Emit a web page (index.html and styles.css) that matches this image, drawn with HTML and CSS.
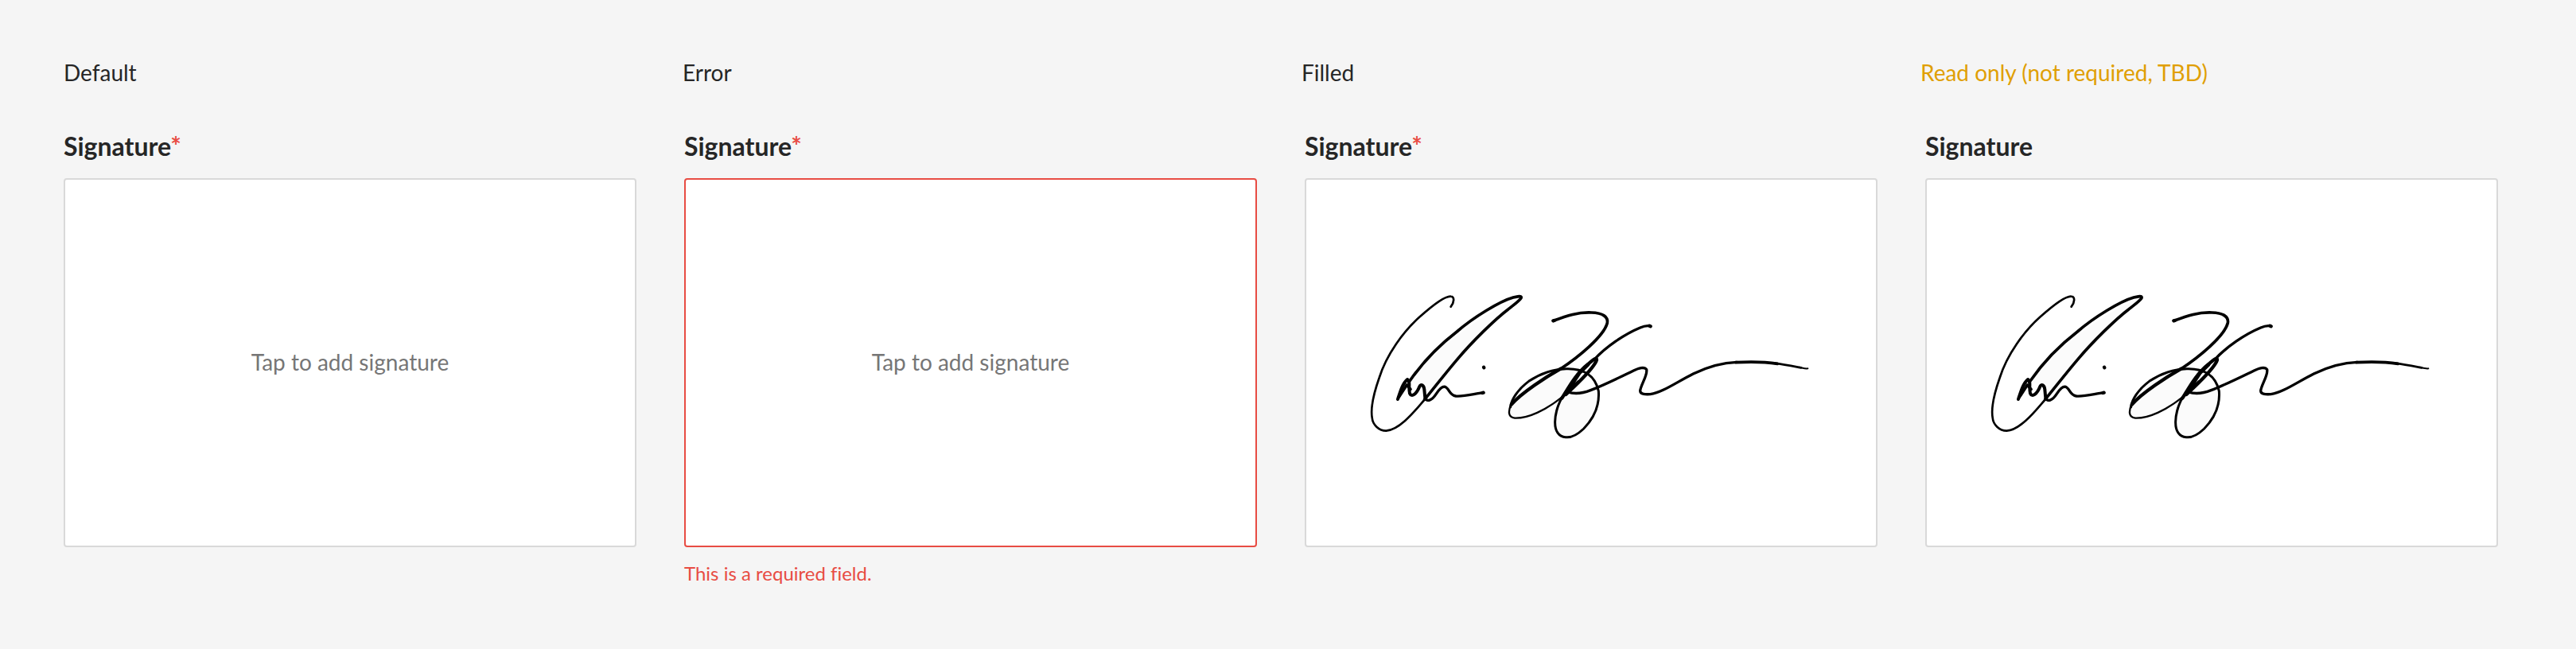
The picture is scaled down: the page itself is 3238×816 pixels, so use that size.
FILE: index.html
```html
<!DOCTYPE html>
<html lang="en">
<head>
<meta charset="utf-8">
<title>Signature field</title>
<link rel="stylesheet" href="styles.css">
</head>
<body>
<svg class="defs" aria-hidden="true">
  <symbol id="signature" viewBox="0 0 1800 636">
    <g class="shade">
      <path d="M216 387C300 290 400 205 480 155C540 115 600 85 632 76C560 140 480 215 420 285C370 340 330 390 283 440C262 400 240 400 216 387Z"/>
      <path d="M592 480C600 430 680 355 785 341L830 345C850 370 800 430 775 455C720 500 650 528 605 526C588 520 588 500 592 480Z"/>
      <path d="M790 455L830 430C860 440 900 425 925 410C930 480 890 570 810 599C760 590 750 540 790 455Z"/>
    </g>
    <g class="ink">
      <path class="w7" d="M371 107C384 91 386 68 371 68C350 66 300 104 254 145C192 200 128 288 101 375C81 432 68 490 74 525C76 552 100 575 127 575C172 572 222 518 272 457"/>
      <path class="w10" d="M272 457C312 408 345 365 394 307C452 238 540 152 588 116C608 100 628 86 636 74C640 64 622 68 606 72C556 86 456 147 394 201C330 250 268 312 216 387"/>
      <path class="w11" d="M171 456C180 428 189 396 207 381C220 390 210 407 216 434C223 450 242 436 253 408C259 396 270 404 271 420L274 452"/>
      <path class="w10" d="M175 448L205 402L219 418"/>
      <path class="w9" d="M274 452C280 466 299 462 315 437C326 420 341 402 353 411C368 422 366 440 390 444C420 447 460 435 494 431"/>
      <path class="w12" d="M495 335L496 337M490 432L494 431"/>
      <path class="w10" d="M758 160C810 140 850 127 901 129C945 130 965 146 961 168C948 220 846 301 785 341"/>
      <path class="w12" d="M785 341C730 372 640 430 600 475"/>
      <path class="w8" d="M596 486C598 460 622 420 665 388C705 361 750 342 806 341C868 339 915 364 928 425C932 475 914 524 872 567C850 588 824 602 804 599C777 598 764 574 764 545C763 520 772 480 790 451"/>
      <path class="w6" d="M598 475C586 504 588 524 612 527C664 529 730 495 782 454C790 448 805 430 815 420"/>
      <path class="w12" d="M790 452C812 418 842 360 888 324C910 304 922 296 921 308C915 327 885 360 854 391C835 410 820 424 805 438"/>
      <path class="w12" d="M802 437L838 385L858 355L889 325M812 429L852 391"/>
      <path class="w9" d="M911 307C956 258 1025 211 1085 186C1103 178 1112 177 1124 180"/>
      <path class="w9" d="M812 429C832 435 858 438 898 422C950 402 1010 372 1060 348C1080 338 1102 333 1109 344C1114 365 1086 404 1085 425C1086 438 1105 438 1123 437C1170 430 1220 393 1285 360C1340 333 1390 318 1450 316"/>
      <path class="w10" d="M1445 317C1495 314 1550 314 1603 322"/>
      <path class="w7" d="M1590 320C1630 325 1665 332 1692 337"/>
      <path class="w5" d="M1685 335C1699 338 1705 341 1717 340"/>
      <path class="w12" d="M1120 179L1124 181M757 160L761 159"/>
    </g>
  </symbol>
</svg>
<main class="states">
  <section class="state">
    <p class="caption">Default</p>
    <h2 class="label">Signature<span class="required">*</span></h2>
    <div class="pad">Tap to add signature</div>
  </section>
  <section class="state">
    <p class="caption caption-error">Error</p>
    <h2 class="label">Signature<span class="required">*</span></h2>
    <div class="pad pad-error">Tap to add signature</div>
    <p class="message">This is a required field.</p>
  </section>
  <section class="state">
    <p class="caption caption-filled">Filled</p>
    <h2 class="label">Signature<span class="required">*</span></h2>
    <div class="pad pad-signed"><svg class="signature"><use href="#signature"/></svg></div>
  </section>
  <section class="state">
    <p class="caption caption-readonly">Read only (not required, TBD)</p>
    <h2 class="label">Signature</h2>
    <div class="pad pad-signed"><svg class="signature"><use href="#signature"/></svg></div>
  </section>
</main>
</body>
</html>
```
FILE: styles.css
```css
* {
  box-sizing: border-box;
}

body {
  margin: 0;
  background: #f5f5f5;
  color: #262626;
  font-family: Lato, "Liberation Sans", sans-serif;
  font-variant-ligatures: no-common-ligatures;
}

.defs {
  display: none;
}

.states {
  display: grid;
  grid-template-columns: repeat(4, 720px);
  column-gap: 60px;
  height: 816px;
  padding: 71px 0 0 80px;
}

.caption,
.label,
.message {
  margin: 0;
  white-space: nowrap;
}

.caption {
  font-size: 28px;
  line-height: 40px;
}

.caption-error {
  margin-left: -2px;
}

.caption-filled {
  margin-left: -4px;
}

.caption-readonly {
  margin-left: -6px;
  color: #e09f04;
}

.label {
  margin-top: 53px;
  font-size: 32px;
  font-weight: 700;
  line-height: 40px;
}

.required {
  color: #e84c43;
}

.pad {
  display: flex;
  align-items: center;
  justify-content: center;
  height: 464px;
  margin-top: 20px;
  padding-bottom: 2px;
  border: 2px solid #d9d9d9;
  border-radius: 4px;
  background: #fff;
  color: #767676;
  font-size: 28px;
  line-height: 40px;
}

.pad-error {
  border-color: #e84c43;
}

.pad-signed {
  padding-bottom: 0;
}

.message {
  margin-top: 17px;
  color: #e84c43;
  font-size: 24px;
  line-height: 32px;
}

.signature {
  width: 600px;
  height: 212px;
}

.shade {
  fill: #fbfbfb;
}

.ink {
  fill: none;
  stroke: #000;
  stroke-linecap: round;
  stroke-linejoin: round;
}

.w5 { stroke-width: 6px; }
.w6 { stroke-width: 7px; }
.w7 { stroke-width: 8px; }
.w8 { stroke-width: 9px; }
.w9 { stroke-width: 10px; }
.w10 { stroke-width: 11px; }
.w11 { stroke-width: 12px; }
.w12 { stroke-width: 13px; }
```
